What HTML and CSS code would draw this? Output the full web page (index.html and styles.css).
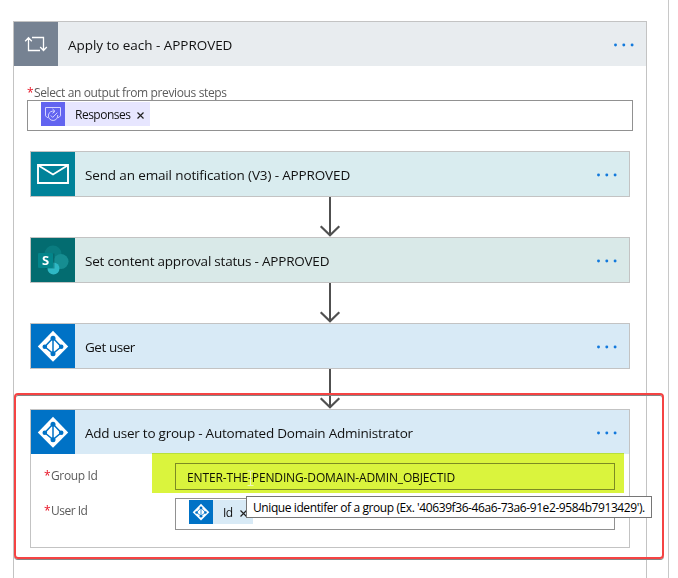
FILE: index.html
```html
<!DOCTYPE html>
<html lang="en">
<head>
<meta charset="utf-8">
<title>Apply to each - APPROVED</title>
<link rel="stylesheet" href="styles.css">
</head>
<body>
<svg class="defs" width="0" height="0" aria-hidden="true">
  <defs>
    <symbol id="aad" viewBox="0 0 44 44">
      <path d="M22 6.800 37.200 22.500 22 37.800 6.800 22.500Z" fill="#fff"/>
      <path d="M22 14v15.500M22 14 13.800 22.800l8.200 6.700 8.200-6.700Z" fill="none" stroke="#0072c6" stroke-width="1.500"/>
      <g fill="#0072c6"><circle cx="22" cy="14.300" r="2.500"/><circle cx="13.800" cy="22.700" r="2.300"/><circle cx="30.200" cy="22.700" r="2.300"/><circle cx="22" cy="29.800" r="2.500"/></g>
    </symbol>
    <symbol id="arrow" viewBox="0 0 22 40">
      <path d="M11 0v38" stroke="#505050" stroke-width="2" fill="none"/>
      <path d="M1.700 29.300 11 38.300l9.300-9" stroke="#505050" stroke-width="2.200" fill="none"/>
    </symbol>
    <symbol id="dots" viewBox="0 0 22 4">
      <g fill="#1279dc"><circle cx="2.500" cy="2" r="1.450"/><circle cx="10.800" cy="2" r="1.450"/><circle cx="19.100" cy="2" r="1.450"/></g>
    </symbol>
  </defs>
</svg>
<main class="canvas">
  <section class="loop">
    <header class="head loop-head">
      <span class="icon slate"><svg width="44" height="44" viewBox="0 0 44 44" fill="none" stroke="#fff" stroke-width="1.300"><path d="M26 28.500H14.500V15.800M11.200 19.300l3.300-3.500 3.300 3.500M18 15.500H29.500V28.300M26.200 25l3.300 3.500 3.300-3.500"/></svg></span>
      <h1 class="title t-loop">Apply to each - APPROVED</h1>
      <svg class="dots" width="22" height="4"><use href="#dots"/></svg>
    </header>
    <div class="loop-body">
      <label class="label"><b>*</b><span class="l-select">Select an output from previous steps</span></label>
      <div class="input select-input">
        <span class="chip violet"><span class="chip-icon"><svg width="24" height="24" viewBox="0 0 24 24" fill="none" stroke="#d5d5ff" stroke-width="1"><path d="M7 15.500H6.200L4.500 13.800V5.500H19.500V13.800L17.800 15.500H17M13.500 9.300A4.700 4.700 0 1 0 16.700 13M11.500 7l2.500 2.300-2.500 2M9.800 13.500l1.900 1.900 4.600-4.700"/></svg></span><span class="chip-text c-resp">Responses</span><svg class="x" width="7" height="7" viewBox="0 0 7 7"><path d="M.5.5l6 6M6.500.5l-6 6" stroke="#222" stroke-width="1.200"/></svg></span>
      </div>
      <div class="steps">
        <article class="card"><header class="head mail-head">
          <span class="icon teal"><svg width="44" height="44" viewBox="0 0 44 44" fill="none" stroke="#fff" stroke-width="1.900"><path d="M7 13H37V31H7ZM7.500 13.500 22 22.500l14.500-9"/></svg></span>
          <h2 class="title t-mail">Send an email notification (V3) - APPROVED</h2>
          <svg class="dots" width="22" height="4"><use href="#dots"/></svg>
        </header></article>
        <svg class="arrow" width="22" height="40"><use href="#arrow"/></svg>
        <article class="card"><header class="head sp-head">
          <span class="icon green"><svg width="44" height="44" viewBox="0 0 44 44"><circle cx="22" cy="16" r="8.500" fill="#0a7c80"/><circle cx="30" cy="23.500" r="7.500" fill="#168d91"/><circle cx="22.500" cy="30.500" r="6" fill="#2eb8c4"/><path d="M14 15.500h9.500v15H14z" fill="#025356" opacity=".45"/><rect x="7" y="15" width="15" height="15" rx="1.200" fill="#03858a"/><text class="sp-letter" x="11" y="27">S</text></svg></span>
          <h2 class="title t-set">Set content approval status - APPROVED</h2>
          <svg class="dots" width="22" height="4"><use href="#dots"/></svg>
        </header></article>
        <svg class="arrow" width="22" height="40"><use href="#arrow"/></svg>
        <article class="card"><header class="head aad-head">
          <span class="icon blue"><svg width="44" height="44"><use href="#aad"/></svg></span>
          <h2 class="title t-get">Get user</h2>
          <svg class="dots" width="22" height="4"><use href="#dots"/></svg>
        </header></article>
        <svg class="arrow" width="22" height="40"><use href="#arrow"/></svg>
        <article class="card"><header class="head aad-head">
          <span class="icon blue"><svg width="44" height="44"><use href="#aad"/></svg></span>
          <h2 class="title t-add">Add user to group - Automated Domain Administrator</h2>
          <svg class="dots" width="22" height="4"><use href="#dots"/></svg>
        </header>
        <div class="fields">
          <span class="label"><b>*</b><span class="l-group">Group Id</span></span>
          <div class="input group-input"><span class="value">ENTER-THE-PENDING-DOMAIN-ADMIN_OBJECTID</span></div>
          <span class="label user-label"><b>*</b><span class="l-user">User Id</span></span>
          <div class="input user-input"><span class="chip sky"><span class="chip-icon"><svg width="24" height="24" viewBox="0 0 44 44"><use href="#aad" width="44" height="44"/></svg></span><span class="chip-text c-id">Id</span><svg class="x" width="7" height="7" viewBox="0 0 7 7"><path d="M.5.5l6 6M6.500.5l-6 6" stroke="#222" stroke-width="1.200"/></svg></span></div>
        </div></article>
      </div>
    </div>
  </section>
  <div class="highlight"></div>
  <svg class="caret" width="7" height="17" viewBox="0 0 7 17"><path d="M.5 1H3L3.500 1.500 4 1H6.500M3.500 1.500V15M.5 15.500H6.500" stroke="#eef6c2" fill="none"/></svg>
  <div class="callout"></div>
  <div class="tooltip"><span>Unique identifer of a group (Ex. '40639f36-46a6-73a6-91e2-9584b7913429').</span></div>
</main>
</body>
</html>
```
FILE: styles.css
```css
* { box-sizing: border-box; }
body { margin: 0; background: #fff; font-family: "Open Sans", "Noto Sans", sans-serif; color: #111; overflow: hidden; }
.defs { position: absolute; }
svg { display: block; flex: none; }
.canvas { position: relative; width: 669px; height: 578px; padding: 21px 0 0 13px; border-right: 1px solid #c8c8c8; overflow: visible; }
.loop { width: 634px; height: 557px; border: 1px solid #c3c3c3; border-bottom: 0; }
.head { display: flex; align-items: center; height: 44px; }
.icon { width: 44px; height: 44px; flex: none; }
.slate { background: #768292; }
.teal { background: #008299; }
.green { background: #036c70; }
.blue { background: #0072c6; }
.loop-head { background: #e8ecef; }
.mail-head { background: #d9ecef; }
.sp-head { background: #d9e9e8; }
.aad-head { background: #d8eaf6; }
.title { flex: 1; margin: 0 0 0 10px; padding-top: 2px; font-size: 13.500px; font-weight: 400; line-height: 20px; white-space: nowrap; }
.t-loop { letter-spacing: -.04px; }
.t-mail { letter-spacing: -.14px; }
.t-set { letter-spacing: -.22px; }
.t-get { letter-spacing: -.45px; }
.t-add { letter-spacing: -.23px; }
.dots { margin-right: 11px; margin-top: 2px; }
.loop-body { padding: 20px 13px 0; }
.label { display: flex; gap: 0; height: 14px; line-height: 14px; font-size: 12px; color: #5b5b5b; white-space: nowrap; }
.label b { color: #e81123; font-weight: 400; width: 7px; }
.l-select { letter-spacing: -.37px; }
.l-group { letter-spacing: -.35px; }
.l-user { letter-spacing: -.5px; }
.input { border: 1px solid #919191; background: #fff; }
.select-input { width: 606px; height: 31px; padding: 1px 13px; }
.chip { display: flex; align-items: center; height: 24px; font-size: 12px; }
.chip-icon { width: 24px; height: 24px; display: grid; place-content: center; flex: none; overflow: hidden; }
.violet { width: 109px; background: #e7e6ff; }
.violet .chip-icon { background: #6264f0; }
.sky { width: 64px; background: #d8eaf6; }
.sky .chip-icon { background: #0072c6; }
.chip-text { margin-left: 10px; padding-top: 1px; white-space: nowrap; letter-spacing: -.5px; }
.c-resp { width: 55px; }
.c-id { width: 10px; }
.x { margin: 3px 0 0 7px; }
.steps { margin: 20px 0 0 3px; width: 600px; }
.card { border: 1px solid #c3c3c3; background: #fff; }
.card .dots { margin-right: 11px; }
.arrow { margin-left: 289px; }
.fields { display: grid; grid-template-columns: 131px 440px; grid-template-rows: 27px 32px; row-gap: 8px; height: 93px; padding: 9px 0 0 13px; }
.fields .label { margin-top: 6px; }
.group-input { height: 27px; display: flex; align-items: center; padding: 2px 0 0 11px; font-size: 12px; white-space: nowrap; letter-spacing: -.14px; }
.user-input { height: 32px; padding: 1px 13px; }
.highlight { position: absolute; left: 152px; top: 453px; width: 472px; height: 40px; background: #daf43d; mix-blend-mode: multiply; }
.caret { position: absolute; left: 247px; top: 470px; }
.callout { position: absolute; left: 14px; top: 393px; width: 650px; height: 166px; border: 2px solid #f54343; border-radius: 4px; box-shadow: 0 1px 0 #858585, inset 0 1px 0 #858585; }
.tooltip { position: absolute; left: 246px; top: 496px; width: 406px; height: 22px; border: 1px solid #767676; background: #fff; padding: 1px 0 0 6px; font-size: 12px; line-height: 20px; white-space: nowrap; color: #000; letter-spacing: -.41px; }
.sp-letter { font: 700 13px "Open Sans", sans-serif; fill: #fff; }
```
